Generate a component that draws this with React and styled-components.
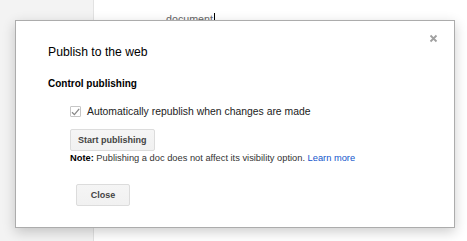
import React from "react";
import styled, { createGlobalStyle } from "styled-components";

const GlobalStyle = createGlobalStyle`
  * { box-sizing: border-box; }
  html, body { margin: 0; padding: 0; background: #fff; }
  body {
    font-family: "Liberation Sans", Arial, sans-serif;
    width: 467px;
    height: 241px;
    overflow: hidden;
  }
`;

const Page = styled.div`
  position: relative;
  display: flex;
  width: 467px;
  height: 241px;
`;

const Sidebar = styled.div`
  width: 94px;
  background: #f3f3f3;
  border-right: 1px solid #e2e2e2;
`;

const DocArea = styled.div`
  flex: 1;
  padding: 9px 0 0 72px;
`;

const DocText = styled.span`
  font-size: 10.7px;
  line-height: 13px;
  color: #666;
`;

const Caret = styled.span`
  display: inline-block;
  width: 1px;
  height: 13px;
  margin-left: 1px;
  vertical-align: -3px;
  background: #000;
`;

const Dialog = styled.div`
  position: absolute;
  left: 15px;
  top: 20px;
  width: 440px;
  height: 208px;
  background: #fff;
  border: 1px solid #acacac;
  box-shadow: 0 4px 12px rgba(0, 0, 0, 0.2);
  padding: 24px 32px 0;
`;

const CloseX = styled.button`
  position: absolute;
  top: 13px;
  right: 16px;
  width: 9px;
  height: 9px;
  padding: 0;
  border: 0;
  background: none;
  cursor: pointer;
  display: flex;
`;

const Title = styled.h2`
  margin: 0;
  font-size: 12.2px;
  line-height: 15px;
  font-weight: normal;
  color: #000;
`;

const Heading = styled.h3`
  margin: 17px 0 0;
  font-size: 10px;
  line-height: 13px;
  font-weight: bold;
  color: #000;
`;

const Options = styled.div`
  display: flex;
  flex-direction: column;
  align-items: flex-start;
  margin: 15px 0 0 ${(p) => p.indent}px;
`;

const CheckRow = styled.label`
  display: flex;
  align-items: center;
  gap: 6px;
  font-size: 10.4px;
  line-height: 13px;
  color: #222;
`;

const Box = styled.span`
  width: 11px;
  height: 11px;
  border: 1px solid #c6c6c6;
  border-radius: 1px;
  background: #fff;
  display: flex;
  align-items: center;
  justify-content: center;
`;

const Button = styled.button`
  height: 22px;
  min-width: 54px;
  padding: 0 7px;
  margin: ${(p) => p.margin || 0};
  border: 1px solid #dcdcdc;
  border-radius: 2px;
  background: linear-gradient(#f5f5f5, #f1f1f1);
  font-family: "Liberation Sans", Arial, sans-serif;
  font-size: 9px;
  font-weight: bold;
  color: #444;
  cursor: default;
`;

const Note = styled.p`
  margin: 2px 0 0;
  font-size: 9.3px;
  line-height: 11px;
  color: #333;

  b { color: #000; }
`;

const Link = styled.a`
  color: #15c;
  text-decoration: none;
`;

export default function App() {
  return (
    <Page>
      <GlobalStyle />
      <Sidebar />
      <DocArea>
        <DocText>document</DocText>
        <Caret />
      </DocArea>
      <Dialog>
        <CloseX aria-label="Close">
          <svg width="9" height="9" viewBox="0 0 9 9">
            <path d="M1.5 1.5 L7.5 7.5 M7.5 1.5 L1.5 7.5" stroke="#a0a0a0" strokeWidth="1.8" />
          </svg>
        </CloseX>
        <Title>Publish to the web</Title>
        <Heading>Control publishing</Heading>
        <Options indent={22}>
          <CheckRow>
            <Box>
              <svg width="9" height="8" viewBox="0 0 9 8">
                <path d="M1 4.2 L3.4 6.6 L8.2 0.8" stroke="#888" strokeWidth="1.3" fill="none" />
              </svg>
            </Box>
            Automatically republish when changes are made
          </CheckRow>
          <Button margin="11px 0 0">Start publishing</Button>
          <Note>
            <b>Note:</b> Publishing a doc does not affect its visibility option.{" "}
            <Link href="#">Learn more</Link>
          </Note>
        </Options>
        <Button margin="20px 0 0 28px">Close</Button>
      </Dialog>
    </Page>
  );
}
